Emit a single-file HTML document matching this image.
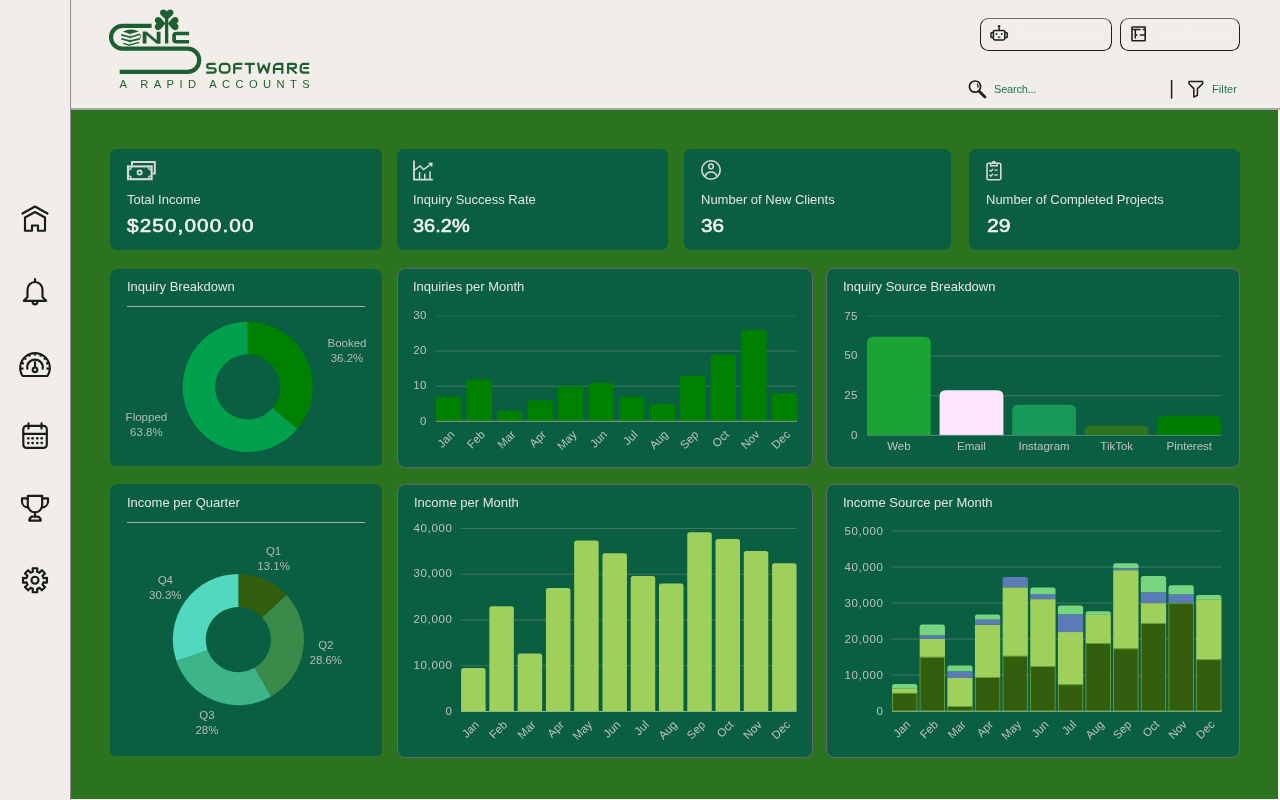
<!DOCTYPE html>
<html><head><meta charset="utf-8"><title>Dashboard</title>
<style>
*{margin:0;padding:0;box-sizing:border-box}
html,body{width:1280px;height:800px;overflow:hidden;background:#f4f1ec;font-family:"Liberation Sans",sans-serif}
#root{position:relative;width:1280px;height:800px;background:#f7f4ef}
.a{position:absolute}
.card{position:absolute;background:#0a5e42;border-radius:7px}
.panel{position:absolute;background:#0a5e42;border-radius:8.5px}
.bord{border:1px solid #686470}
.kl{position:absolute;color:#e2e5df;font-size:13px;white-space:nowrap;line-height:16px}
.kv{position:absolute;color:#f5f5f3;font-size:19px;font-weight:normal;-webkit-text-stroke:0.55px #f5f5f3;white-space:nowrap;line-height:22px}
.pt{position:absolute;color:#e2e5df;font-size:13px;white-space:nowrap;line-height:16px}
svg{position:absolute;overflow:visible;will-change:transform}
.a,.kl,.kv,.pt{will-change:transform}
</style></head><body>
<div id="root">
<div class="a" style="left:0;top:0;width:70px;height:800px;background:#f1eee9"></div>
<div class="a" style="left:70px;top:0;width:1px;height:800px;background:#8d8a90"></div>
<div class="a" style="left:71px;top:0;width:1209px;height:108px;background:#f1eee9"></div>
<div class="a" style="left:71px;top:108px;width:1209px;height:2px;background:#a8a8a6"></div>
<div class="a" style="left:71px;top:110px;width:1207px;height:689px;background:#2c731f"></div>

<svg class="a" style="left:0;top:0" width="1280" height="110" viewBox="0 0 1280 110">
<g fill="none" stroke="#1d5f30" stroke-width="4.2" stroke-linecap="butt">
<path d="M151.6 25.9 H122.4 A11.35 11.35 0 0 0 122.4 48.6 H187.6 A11.6 11.6 0 0 1 187.6 71.8 H119.7"/>
</g>
<g fill="#1d5f30">
<!-- N -->
<rect x="142.7" y="31.7" width="3.8" height="11.8"/>
<rect x="156.7" y="31.7" width="3.8" height="11.8"/>
<polygon points="142.7,31.7 146.8,31.7 160.5,43.5 156.4,43.5"/>
<!-- I / stem -->
<rect x="165" y="17" width="3.3" height="26.5"/>
<!-- C -->
<path d="M189.1 31.7 H176.2 A4 4 0 0 0 172.2 35.7 V39.5 A4 4 0 0 0 176.2 43.5 H189.1 V40 H176 V35.2 H189.1 Z"/>
<!-- shamrock leaves (hearts) -->
<path d="M166.7 19.8 C163 17 160 15 160 12.7 C160 10.8 161.5 9.6 163.3 9.6 C164.8 9.6 166 10.4 166.7 11.6 C167.4 10.4 168.6 9.6 170.1 9.6 C171.9 9.6 173.5 10.8 173.5 12.7 C173.5 15 170.4 17 166.7 19.8 Z"/>
<path d="M165.5 23.6 C162.5 19.9 160.5 17 158.2 17 C156.3 17 154.8 18.5 154.8 20.3 C154.8 21.8 155.6 23 156.8 23.6 C155.6 24.3 154.8 25.5 154.8 27 C154.8 28.8 156.3 30.2 158.2 30.2 C160.5 30.2 162.5 27.3 165.5 23.6 Z"/>
<path d="M167.8 23.6 C170.8 19.9 172.8 17 175.1 17 C177 17 178.5 18.5 178.5 20.3 C178.5 21.8 177.7 23 176.5 23.6 C177.7 24.3 178.5 25.5 178.5 27 C178.5 28.8 177 30.2 175.1 30.2 C172.8 30.2 170.8 27.3 167.8 23.6 Z"/>
</g>
<!-- book stack -->
<path d="M122.9 31.6 Q131 27.6 139 31.6 L129.7 33.9 Z" fill="#1d5f30"/>
<g fill="none" stroke="#1d5f30" stroke-linejoin="round">
<path d="M121.3 34.9 L130.3 37.2 L139.8 34.3" stroke-width="1.7"/>
<path d="M121.3 38.7 L129.9 41.1 L139.7 38.9" stroke-width="1.7"/>
<path d="M123.2 43.4 L129.2 45.1 L139.2 42.3" stroke-width="1.3"/>
<path d="M139.8 34.3 Q141.4 36.6 139.7 38.9" stroke-width="1"/>
<path d="M130.1 33.9 V45.5" stroke-width="0.7" stroke-opacity="0.5"/>
</g>
<g fill="none" stroke="#1d5f30" stroke-width="2.15" stroke-linejoin="round" stroke-linecap="butt">
<path d="M215.6 63.85 H209.6 Q207.15 63.85 207.15 66.05 Q207.15 68.25 209.6 68.25 H213.2 Q215.65 68.25 215.65 70.45 Q215.65 72.65 213.2 72.65 H206.2"/>
<rect x="219.85" y="63.85" width="9.7" height="8.8" rx="3.2"/>
<path d="M242.4 63.85 H236.6 Q234.15 63.85 234.15 66.1 V73.7 M234.15 68.2 H241.8"/>
<path d="M244.7 63.85 H254.8 M249.75 63.85 V73.7"/>
<path d="M257.9 62.8 L259.9 72.65 L263.7 65.3 L267.5 72.65 L269.5 62.8"/>
<path d="M273.95 73.7 V67.6 A3.75 3.75 0 0 1 277.7 63.85 H282.3 V73.7 M273.95 69 H282.3"/>
<path d="M288.1 73.7 V63.85 H293.8 Q296 63.85 296 66.05 Q296 68.25 293.8 68.25 H288.1 M290.6 68.25 L296.6 73.5"/>
<path d="M309.3 63.85 H303.6 A2.9 2.9 0 0 0 300.7 66.75 V69.75 A2.9 2.9 0 0 0 303.6 72.65 H309.3 M303.2 67.95 H308.8"/>
</g>
<text x="119.6" y="88.1" font-family="Liberation Sans" font-size="11.2" fill="#1d5f30" textLength="190" lengthAdjust="spacing">A RAPID ACCOUNTS</text>
</svg>

<div class="a" style="left:980px;top:17.5px;width:132px;height:33.2px;border:1.7px solid #1c1c1c;border-top-color:#6f6d68;border-radius:8.5px"></div>
<div class="a" style="left:1120px;top:17.5px;width:120px;height:33.2px;border:1.7px solid #1c1c1c;border-top-color:#6f6d68;border-radius:8.5px"></div>
<div class="a" style="left:1016px;top:27px;font-size:12px;color:#f2f0eb;white-space:nowrap;line-height:14px">New Automation</div>
<div class="a" style="left:1156px;top:27px;font-size:12px;color:#f2f0eb;white-space:nowrap;line-height:14px">New Template</div>
<svg style="left:0;top:0" width="1280" height="110">
<g fill="none" stroke="#1e1e1e" stroke-width="1.5" stroke-linejoin="round">
 <rect x="993.4" y="30.4" width="11.4" height="9.6" rx="1.4"/>
 <path d="M993.2 32.6 H991.8 A0.8 0.8 0 0 0 991 33.4 V36.8 A0.8 0.8 0 0 0 991.8 37.6 H993.2"/>
 <path d="M1005 32.6 H1006.4 A0.8 0.8 0 0 1 1007.2 33.4 V36.8 A0.8 0.8 0 0 1 1006.4 37.6 H1005"/>
 <path d="M999.1 30.2 V27.2"/>
</g>
<g fill="#1e1e1e"><circle cx="999.1" cy="26.2" r="1.2"/><circle cx="996.5" cy="34" r="0.9"/><circle cx="1001.8" cy="34" r="0.9"/><rect x="997.8" y="36.6" width="2.6" height="1.1" rx="0.5"/></g>
<g fill="none" stroke="#1e1e1e" stroke-width="1.5">
 <rect x="1132" y="27" width="13.2" height="13.8" rx="0.6" stroke-width="1.6"/>
 <path d="M1132 29.5 H1140.6 M1142.6 29.5 H1145.2 M1135.3 29.5 V38.4 M1135.3 35 H1137.4 M1139.8 35 H1145.2"/>
</g>
<g fill="none" stroke="#1e1e1e" stroke-width="1.7">
 <circle cx="975" cy="86.6" r="5.6"/>
 <path d="M977.2 84 A3 3 0 0 1 977.6 87.6" stroke-width="1.1"/>
</g>
<path d="M979.4 91.4 L985 97" stroke="#1e1e1e" stroke-width="2.8" stroke-linecap="round"/>
<path d="M1171.6 80 V98.6" stroke="#1e1e1e" stroke-width="1.5"/>
<path d="M1189 81.6 H1202.6 V83.8 L1197.4 88.6 V95.4 L1193.8 97 V88.6 L1189 83.8 Z" fill="none" stroke="#1e1e1e" stroke-width="1.5" stroke-linejoin="round"/>
</svg>
<div class="a" style="left:994px;top:82.5px;font-size:11px;color:#22744f;white-space:nowrap;line-height:13px;letter-spacing:-0.2px">Search...</div>
<div class="a" style="left:1211.5px;top:82.5px;font-size:11px;color:#22744f;white-space:nowrap;line-height:13px;letter-spacing:0.1px">Filter</div>

<svg style="left:0;top:0" width="71" height="800">
<g fill="none" stroke="#1b1b1b" stroke-width="2.15" stroke-linejoin="round" stroke-linecap="round">
<path d="M22.5 213.5 L35 206.5 L47.5 213.5"/>
<path d="M25 217.5 L35 212 L45 217.5 V230.75 H38 V225.5 H32 V230.75 H25 Z"/>
<path d="M35 279 V282"/>
<path d="M23.8 300.8 H46.2 L42.5 297 V289.6 A7.5 7.6 0 0 0 27.5 289.6 V297 Z"/>
<path d="M32.6 302 A2.4 2.4 0 0 0 37.4 302"/>
<path d="M22.6 376 A14.8 14.8 0 1 1 47.4 376 Z"/>
<path d="M20.91 368.73 L23.49 368.41 M21.42 362.85 L23.91 363.61 M24.12 357.87 L26.11 359.54 M28.78 354.24 L29.91 356.57 M35.00 352.80 L35.00 355.40 M41.22 354.24 L40.09 356.57 M45.88 357.87 L43.89 359.54 M48.58 362.85 L46.09 363.61 M49.09 368.73 L46.51 368.41 " stroke-linecap="butt"/>
<path d="M27.3 368.6 A7.8 7.8 0 1 1 42.7 368.6"/>
<path d="M35 362 V367.6"/>
<circle cx="35" cy="369.8" r="2.3"/>
<rect x="23.3" y="425.9" width="23.5" height="22" rx="3.2"/>
<path d="M23.3 433.8 H46.8"/>
<path d="M28.5 423.2 V428.6 M41.5 423.2 V428.6"/>
<path d="M27.8 495.8 H42.2 V505 A7.2 7.4 0 0 1 27.8 505 Z"/>
<path d="M27.6 498.4 H22 V502 A6 6 0 0 0 27.8 507.4"/>
<path d="M42.4 498.4 H48 V502 A6 6 0 0 1 42.2 507.4"/>
<path d="M35 512.5 V516.5"/>
<path d="M32.2 516.6 H37.8 Q40.6 517.8 40.8 520.6 H29.2 Q29.4 517.8 32.2 516.6 Z"/>
<path d="M32.90 571.81 L32.67 568.27 L37.33 568.27 L37.10 571.81 L39.48 572.79 L41.82 570.14 L45.11 573.43 L42.46 575.77 L43.44 578.15 L46.98 577.92 L46.98 582.58 L43.44 582.35 L42.46 584.73 L45.11 587.07 L41.82 590.36 L39.48 587.71 L37.10 588.69 L37.33 592.23 L32.67 592.23 L32.90 588.69 L30.52 587.71 L28.18 590.36 L24.89 587.07 L27.54 584.73 L26.56 582.35 L23.02 582.58 L23.02 577.92 L26.56 578.15 L27.54 575.77 L24.89 573.43 L28.18 570.14 L30.52 572.79 Z"/>
<circle cx="35" cy="580.25" r="3.5"/>
</g>
<g fill="#1b1b1b">
<circle cx="28.3" cy="438.3" r="1.35"/><circle cx="32.6" cy="438.3" r="1.35"/><circle cx="37.3" cy="438.3" r="1.35"/><circle cx="41.7" cy="438.3" r="1.35"/><circle cx="28.3" cy="443" r="1.35"/><circle cx="32.6" cy="443" r="1.35"/><circle cx="37.3" cy="443" r="1.35"/><circle cx="41.7" cy="443" r="1.35"/>
</g>
</svg>

<div class="card" style="left:110px;top:148.6px;width:272px;height:101.6px"></div>
<div class="card" style="left:397px;top:148.6px;width:271.3px;height:101.6px"></div>
<div class="card" style="left:684px;top:148.6px;width:266.5px;height:101.6px"></div>
<div class="card" style="left:969px;top:148.6px;width:271px;height:101.6px"></div>
<div class="kl" style="left:127px;top:191.5px">Total Income</div>
<div class="kl" style="left:413px;top:191.5px">Inquiry Success Rate</div>
<div class="kl" style="left:701px;top:191.5px">Number of New Clients</div>
<div class="kl" style="left:986px;top:191.5px">Number of Completed Projects</div>
<div class="kv" style="left:127.3px;top:214.5px;letter-spacing:1.0px;font-size:18.5px;transform:scaleX(1.12);transform-origin:0 0">$250,000.00</div>
<div class="kv" style="left:413px;top:214.5px;letter-spacing:0px;font-size:18.5px;transform:scaleX(1.08);transform-origin:0 0">36.2%</div>
<div class="kv" style="left:701px;top:214.5px;letter-spacing:0px;font-size:18.5px;transform:scaleX(1.12);transform-origin:0 0">36</div>
<div class="kv" style="left:987px;top:214.5px;letter-spacing:0px;font-size:18.5px;transform:scaleX(1.145);transform-origin:0 0">29</div>
<svg style="left:0;top:0" width="1280" height="260">
<g fill="none" stroke="#d9d9d7" stroke-width="1.8" stroke-linejoin="miter">
<path d="M132 165.4 V162 H154.8 V173.6 H152.6" stroke-width="2"/>
<rect x="128" y="166.4" width="23.6" height="12.8" stroke-width="2.1"/>
<circle cx="139.6" cy="172.6" r="2.1"/>
<path d="M128.4 169.8 A3 3 0 0 0 131.3 166.8 M148.3 166.8 A3 3 0 0 0 151.2 169.8 M128.4 175.9 A3 3 0 0 1 131.3 178.8 M148.3 178.8 A3 3 0 0 1 151.2 175.9" stroke-width="1.4"/>
<path d="M414 160.6 V179.6 H432.8" stroke-width="1.8"/>
<path d="M414.8 170 L420 166 L423.5 169.6 L431.2 164.2" stroke-width="1.5"/>
<path d="M428.6 163.4 L431.8 163.2 L431.6 166.6" stroke-width="1.5"/>
<path d="M419.6 172 V179 M424.8 173.6 V179 M430 171.2 V179" stroke-width="1.5"/>
<circle cx="711" cy="170" r="9.2" stroke-width="1.6"/>
<circle cx="711" cy="166.4" r="2.3" stroke-width="1.5"/>
<path d="M705 176.4 A6.3 6.3 0 0 1 717 176.4" stroke-width="1.6"/>
<rect x="987" y="163.2" width="13.8" height="16.6" rx="1.6" stroke-width="1.6"/>
<path d="M990.6 163.2 V165.8 H997.2 V163.2 M992.4 163 A1.4 1.4 0 0 1 995.4 163" stroke-width="1.5"/>
<path d="M989.4 170 L990.8 171.4 L993 169 M989.4 174.8 L990.8 176.2 L993 173.8 M994.4 170.2 H997.6 M994.4 175 H997.6" stroke-width="1.3"/>
</g>
</svg>

<div class="panel" style="left:110px;top:268.7px;width:272px;height:197.1px;border-radius:8px 8px 6px 6px"></div>
<div class="panel bord" style="left:397.2px;top:268.4px;width:415.8px;height:199.4px"></div>
<div class="panel bord" style="left:826.2px;top:268.4px;width:413.8px;height:199.4px"></div>
<div class="panel" style="left:110px;top:484px;width:272px;height:272px;border-radius:8px 8px 5.5px 5.5px"></div>
<div class="panel bord" style="left:397.2px;top:483.6px;width:415.8px;height:274px"></div>
<div class="panel bord" style="left:826.2px;top:483.6px;width:413.8px;height:274px"></div>
<div class="pt" style="left:127px;top:278.8px">Inquiry Breakdown</div>
<div class="pt" style="left:413px;top:278.8px">Inquiries per Month</div>
<div class="pt" style="left:843px;top:278.8px">Inquiry Source Breakdown</div>
<div class="pt" style="left:127px;top:494.8px">Income per Quarter</div>
<div class="pt" style="left:414px;top:494.8px">Income per Month</div>
<div class="pt" style="left:843px;top:494.8px">Income Source per Month</div>
<div class="a" style="left:127px;top:305.6px;width:238px;height:1.3px;background:#a9b1a9"></div>
<div class="a" style="left:127px;top:521.6px;width:238px;height:1.3px;background:#a9b1a9"></div>
<svg style="left:0;top:0" width="1280" height="800"><path fill="#008000" d="M247.70 321.80 A65.1 65.1 0 0 1 297.34 429.02 L272.48 407.93 A32.5 32.5 0 0 0 247.70 354.40 Z"/><path fill="#00a04c" d="M297.34 429.02 A65.1 65.1 0 1 1 247.70 321.80 L247.70 354.40 A32.5 32.5 0 1 0 272.48 407.93 Z"/><text x="347.00" y="346.60" text-anchor="middle" font-family="Liberation Sans" font-size="11.5" fill="#b4bcb2" >Booked</text><text x="347.00" y="361.50" text-anchor="middle" font-family="Liberation Sans" font-size="11.5" fill="#b4bcb2" >36.2%</text><text x="146.40" y="420.80" text-anchor="middle" font-family="Liberation Sans" font-size="11.5" fill="#b4bcb2" >Flopped</text><text x="146.40" y="435.60" text-anchor="middle" font-family="Liberation Sans" font-size="11.5" fill="#b4bcb2" >63.8%</text><path fill="#335e0e" d="M238.40 574.00 A65.6 65.6 0 0 1 286.50 595.00 L262.30 617.43 A32.6 32.6 0 0 0 238.40 607.00 Z"/><path fill="#3a8a4a" d="M286.50 595.00 A65.6 65.6 0 0 1 271.08 696.48 L254.64 667.87 A32.6 32.6 0 0 0 262.30 617.43 Z"/><path fill="#3eb489" d="M271.08 696.48 A65.6 65.6 0 0 1 176.40 661.04 L207.59 650.26 A32.6 32.6 0 0 0 254.64 667.87 Z"/><path fill="#52d8be" d="M176.40 661.04 A65.6 65.6 0 0 1 238.40 574.00 L238.40 607.00 A32.6 32.6 0 0 0 207.59 650.26 Z"/><text x="273.60" y="555.00" text-anchor="middle" font-family="Liberation Sans" font-size="11.5" fill="#b4bcb2" >Q1</text><text x="273.60" y="569.50" text-anchor="middle" font-family="Liberation Sans" font-size="11.5" fill="#b4bcb2" >13.1%</text><text x="325.80" y="649.00" text-anchor="middle" font-family="Liberation Sans" font-size="11.5" fill="#b4bcb2" >Q2</text><text x="325.80" y="664.00" text-anchor="middle" font-family="Liberation Sans" font-size="11.5" fill="#b4bcb2" >28.6%</text><text x="206.90" y="719.30" text-anchor="middle" font-family="Liberation Sans" font-size="11.5" fill="#b4bcb2" >Q3</text><text x="206.90" y="734.20" text-anchor="middle" font-family="Liberation Sans" font-size="11.5" fill="#b4bcb2" >28%</text><text x="165.30" y="584.40" text-anchor="middle" font-family="Liberation Sans" font-size="11.5" fill="#b4bcb2" >Q4</text><text x="165.30" y="599.30" text-anchor="middle" font-family="Liberation Sans" font-size="11.5" fill="#b4bcb2" >30.3%</text><path d="M436 316.00 H797" stroke="#3d7a5c" stroke-width="1" stroke-opacity="0.55"/><path d="M436 351.10 H797" stroke="#3d7a5c" stroke-width="1" stroke-opacity="1"/><path d="M436 386.20 H797" stroke="#3d7a5c" stroke-width="1" stroke-opacity="1"/><path fill="#008000" d="M436.00 421.30 V399.23 Q436.00 396.73 438.50 396.73 H459.00 Q461.50 396.73 461.50 399.23 V421.30 Z"/><path fill="#008000" d="M466.50 421.30 V381.68 Q466.50 379.18 469.00 379.18 H489.50 Q492.00 379.18 492.00 381.68 V421.30 Z"/><path fill="#008000" d="M497.00 421.30 V413.27 Q497.00 410.77 499.50 410.77 H520.00 Q522.50 410.77 522.50 413.27 V421.30 Z"/><path fill="#008000" d="M527.50 421.30 V402.74 Q527.50 400.24 530.00 400.24 H550.50 Q553.00 400.24 553.00 402.74 V421.30 Z"/><path fill="#008000" d="M558.00 421.30 V388.70 Q558.00 386.20 560.50 386.20 H581.00 Q583.50 386.20 583.50 388.70 V421.30 Z"/><path fill="#008000" d="M588.50 421.30 V385.19 Q588.50 382.69 591.00 382.69 H611.50 Q614.00 382.69 614.00 385.19 V421.30 Z"/><path fill="#008000" d="M619.00 421.30 V399.23 Q619.00 396.73 621.50 396.73 H642.00 Q644.50 396.73 644.50 399.23 V421.30 Z"/><path fill="#008000" d="M649.50 421.30 V406.25 Q649.50 403.75 652.00 403.75 H672.50 Q675.00 403.75 675.00 406.25 V421.30 Z"/><path fill="#008000" d="M680.00 421.30 V378.17 Q680.00 375.67 682.50 375.67 H703.00 Q705.50 375.67 705.50 378.17 V421.30 Z"/><path fill="#008000" d="M710.50 421.30 V357.11 Q710.50 354.61 713.00 354.61 H733.50 Q736.00 354.61 736.00 357.11 V421.30 Z"/><path fill="#008000" d="M741.00 421.30 V332.54 Q741.00 330.04 743.50 330.04 H764.00 Q766.50 330.04 766.50 332.54 V421.30 Z"/><path fill="#008000" d="M771.50 421.30 V395.72 Q771.50 393.22 774.00 393.22 H794.50 Q797.00 393.22 797.00 395.72 V421.30 Z"/><path d="M436 421.30 H797" stroke="#8a9a8e" stroke-width="1"/><text x="426.60" y="319.20" text-anchor="end" font-family="Liberation Sans" font-size="11.5" fill="#bec4bb" letter-spacing="0.3">30</text><text x="426.60" y="354.30" text-anchor="end" font-family="Liberation Sans" font-size="11.5" fill="#bec4bb" letter-spacing="0.3">20</text><text x="426.60" y="389.40" text-anchor="end" font-family="Liberation Sans" font-size="11.5" fill="#bec4bb" letter-spacing="0.3">10</text><text x="426.60" y="424.50" text-anchor="end" font-family="Liberation Sans" font-size="11.5" fill="#bec4bb" letter-spacing="0.3">0</text><text x="455.25" y="435.30" text-anchor="end" font-family="Liberation Sans" font-size="11.5" fill="#bec4bb" transform="rotate(-45 455.25 435.30)">Jan</text><text x="485.75" y="435.30" text-anchor="end" font-family="Liberation Sans" font-size="11.5" fill="#bec4bb" transform="rotate(-45 485.75 435.30)">Feb</text><text x="516.25" y="435.30" text-anchor="end" font-family="Liberation Sans" font-size="11.5" fill="#bec4bb" transform="rotate(-45 516.25 435.30)">Mar</text><text x="546.75" y="435.30" text-anchor="end" font-family="Liberation Sans" font-size="11.5" fill="#bec4bb" transform="rotate(-45 546.75 435.30)">Apr</text><text x="577.25" y="435.30" text-anchor="end" font-family="Liberation Sans" font-size="11.5" fill="#bec4bb" transform="rotate(-45 577.25 435.30)">May</text><text x="607.75" y="435.30" text-anchor="end" font-family="Liberation Sans" font-size="11.5" fill="#bec4bb" transform="rotate(-45 607.75 435.30)">Jun</text><text x="638.25" y="435.30" text-anchor="end" font-family="Liberation Sans" font-size="11.5" fill="#bec4bb" transform="rotate(-45 638.25 435.30)">Jul</text><text x="668.75" y="435.30" text-anchor="end" font-family="Liberation Sans" font-size="11.5" fill="#bec4bb" transform="rotate(-45 668.75 435.30)">Aug</text><text x="699.25" y="435.30" text-anchor="end" font-family="Liberation Sans" font-size="11.5" fill="#bec4bb" transform="rotate(-45 699.25 435.30)">Sep</text><text x="729.75" y="435.30" text-anchor="end" font-family="Liberation Sans" font-size="11.5" fill="#bec4bb" transform="rotate(-45 729.75 435.30)">Oct</text><text x="760.25" y="435.30" text-anchor="end" font-family="Liberation Sans" font-size="11.5" fill="#bec4bb" transform="rotate(-45 760.25 435.30)">Nov</text><text x="790.75" y="435.30" text-anchor="end" font-family="Liberation Sans" font-size="11.5" fill="#bec4bb" transform="rotate(-45 790.75 435.30)">Dec</text><path d="M867 316.15 H1221.2" stroke="#3d7a5c" stroke-width="1" stroke-opacity="0.55"/><path d="M867 355.90 H1221.2" stroke="#3d7a5c" stroke-width="1" stroke-opacity="1"/><path d="M867 395.65 H1221.2" stroke="#3d7a5c" stroke-width="1" stroke-opacity="1"/><path fill="#1ba336" d="M867.00 435.40 V342.82 Q867.00 336.82 873.00 336.82 H924.80 Q930.80 336.82 930.80 342.82 V435.40 Z"/><path fill="#fde6fd" d="M939.60 435.40 V396.24 Q939.60 390.24 945.60 390.24 H997.40 Q1003.40 390.24 1003.40 396.24 V435.40 Z"/><path fill="#17995a" d="M1012.20 435.40 V410.87 Q1012.20 404.87 1018.20 404.87 H1070.00 Q1076.00 404.87 1076.00 410.87 V435.40 Z"/><path fill="#2c731f" d="M1084.80 435.40 V431.54 Q1084.80 425.54 1090.80 425.54 H1142.60 Q1148.60 425.54 1148.60 431.54 V435.40 Z"/><path fill="#007d00" d="M1157.40 435.40 V421.84 Q1157.40 415.84 1163.40 415.84 H1215.20 Q1221.20 415.84 1221.20 421.84 V435.40 Z"/><path d="M867 435.40 H1221.2" stroke="#4f8a6a" stroke-width="1"/><text x="857.60" y="319.55" text-anchor="end" font-family="Liberation Sans" font-size="11.5" fill="#bec4bb" letter-spacing="0.3">75</text><text x="857.60" y="359.30" text-anchor="end" font-family="Liberation Sans" font-size="11.5" fill="#bec4bb" letter-spacing="0.3">50</text><text x="857.60" y="399.05" text-anchor="end" font-family="Liberation Sans" font-size="11.5" fill="#bec4bb" letter-spacing="0.3">25</text><text x="857.60" y="438.80" text-anchor="end" font-family="Liberation Sans" font-size="11.5" fill="#bec4bb" letter-spacing="0.3">0</text><text x="898.90" y="450.00" text-anchor="middle" font-family="Liberation Sans" font-size="11.5" fill="#bec4bb" >Web</text><text x="971.50" y="450.00" text-anchor="middle" font-family="Liberation Sans" font-size="11.5" fill="#bec4bb" >Email</text><text x="1044.10" y="450.00" text-anchor="middle" font-family="Liberation Sans" font-size="11.5" fill="#bec4bb" >Instagram</text><text x="1116.70" y="450.00" text-anchor="middle" font-family="Liberation Sans" font-size="11.5" fill="#bec4bb" >TikTok</text><text x="1189.30" y="450.00" text-anchor="middle" font-family="Liberation Sans" font-size="11.5" fill="#bec4bb" >Pinterest</text><path d="M461.1 528.50 H796.5" stroke="#3d7a5c" stroke-width="1"/><path d="M461.1 574.25 H796.5" stroke="#3d7a5c" stroke-width="1"/><path d="M461.1 620.00 H796.5" stroke="#3d7a5c" stroke-width="1"/><path d="M461.1 665.75 H796.5" stroke="#3d7a5c" stroke-width="1"/><path fill="#a0d05c" d="M461.10 711.50 V670.54 Q461.10 668.04 463.60 668.04 H483.10 Q485.60 668.04 485.60 670.54 V711.50 Z"/><path fill="#a0d05c" d="M489.37 711.50 V608.77 Q489.37 606.27 491.87 606.27 H511.37 Q513.87 606.27 513.87 608.77 V711.50 Z"/><path fill="#a0d05c" d="M517.64 711.50 V655.90 Q517.64 653.40 520.14 653.40 H539.64 Q542.14 653.40 542.14 655.90 V711.50 Z"/><path fill="#a0d05c" d="M545.91 711.50 V590.48 Q545.91 587.98 548.41 587.98 H567.91 Q570.41 587.98 570.41 590.48 V711.50 Z"/><path fill="#a0d05c" d="M574.18 711.50 V542.89 Q574.18 540.39 576.68 540.39 H596.18 Q598.68 540.39 598.68 542.89 V711.50 Z"/><path fill="#a0d05c" d="M602.45 711.50 V555.70 Q602.45 553.20 604.95 553.20 H624.45 Q626.95 553.20 626.95 555.70 V711.50 Z"/><path fill="#a0d05c" d="M630.72 711.50 V578.58 Q630.72 576.08 633.22 576.08 H652.72 Q655.22 576.08 655.22 578.58 V711.50 Z"/><path fill="#a0d05c" d="M658.99 711.50 V585.90 Q658.99 583.40 661.49 583.40 H680.99 Q683.49 583.40 683.49 585.90 V711.50 Z"/><path fill="#a0d05c" d="M687.26 711.50 V534.66 Q687.26 532.16 689.76 532.16 H709.26 Q711.76 532.16 711.76 534.66 V711.50 Z"/><path fill="#a0d05c" d="M715.53 711.50 V541.52 Q715.53 539.02 718.03 539.02 H737.53 Q740.03 539.02 740.03 541.52 V711.50 Z"/><path fill="#a0d05c" d="M743.80 711.50 V553.42 Q743.80 550.92 746.30 550.92 H765.80 Q768.30 550.92 768.30 553.42 V711.50 Z"/><path fill="#a0d05c" d="M772.07 711.50 V565.77 Q772.07 563.27 774.57 563.27 H794.07 Q796.57 563.27 796.57 565.77 V711.50 Z"/><path d="M461.1 711.50 H796.5" stroke="#8fb880" stroke-width="1"/><text x="452.40" y="531.50" text-anchor="end" font-family="Liberation Sans" font-size="11.5" fill="#bec4bb" letter-spacing="0.6">40,000</text><text x="452.40" y="577.25" text-anchor="end" font-family="Liberation Sans" font-size="11.5" fill="#bec4bb" letter-spacing="0.6">30,000</text><text x="452.40" y="623.00" text-anchor="end" font-family="Liberation Sans" font-size="11.5" fill="#bec4bb" letter-spacing="0.6">20,000</text><text x="452.40" y="668.75" text-anchor="end" font-family="Liberation Sans" font-size="11.5" fill="#bec4bb" letter-spacing="0.6">10,000</text><text x="452.40" y="714.50" text-anchor="end" font-family="Liberation Sans" font-size="11.5" fill="#bec4bb" letter-spacing="0.6">0</text><text x="479.85" y="725.50" text-anchor="end" font-family="Liberation Sans" font-size="11.5" fill="#bec4bb" transform="rotate(-45 479.85 725.50)">Jan</text><text x="508.12" y="725.50" text-anchor="end" font-family="Liberation Sans" font-size="11.5" fill="#bec4bb" transform="rotate(-45 508.12 725.50)">Feb</text><text x="536.39" y="725.50" text-anchor="end" font-family="Liberation Sans" font-size="11.5" fill="#bec4bb" transform="rotate(-45 536.39 725.50)">Mar</text><text x="564.66" y="725.50" text-anchor="end" font-family="Liberation Sans" font-size="11.5" fill="#bec4bb" transform="rotate(-45 564.66 725.50)">Apr</text><text x="592.93" y="725.50" text-anchor="end" font-family="Liberation Sans" font-size="11.5" fill="#bec4bb" transform="rotate(-45 592.93 725.50)">May</text><text x="621.20" y="725.50" text-anchor="end" font-family="Liberation Sans" font-size="11.5" fill="#bec4bb" transform="rotate(-45 621.20 725.50)">Jun</text><text x="649.47" y="725.50" text-anchor="end" font-family="Liberation Sans" font-size="11.5" fill="#bec4bb" transform="rotate(-45 649.47 725.50)">Jul</text><text x="677.74" y="725.50" text-anchor="end" font-family="Liberation Sans" font-size="11.5" fill="#bec4bb" transform="rotate(-45 677.74 725.50)">Aug</text><text x="706.01" y="725.50" text-anchor="end" font-family="Liberation Sans" font-size="11.5" fill="#bec4bb" transform="rotate(-45 706.01 725.50)">Sep</text><text x="734.28" y="725.50" text-anchor="end" font-family="Liberation Sans" font-size="11.5" fill="#bec4bb" transform="rotate(-45 734.28 725.50)">Oct</text><text x="762.55" y="725.50" text-anchor="end" font-family="Liberation Sans" font-size="11.5" fill="#bec4bb" transform="rotate(-45 762.55 725.50)">Nov</text><text x="790.82" y="725.50" text-anchor="end" font-family="Liberation Sans" font-size="11.5" fill="#bec4bb" transform="rotate(-45 790.82 725.50)">Dec</text><path d="M892 530.95 H1221.7" stroke="#3d7a5c" stroke-width="1"/><path d="M892 567.00 H1221.7" stroke="#3d7a5c" stroke-width="1"/><path d="M892 603.05 H1221.7" stroke="#3d7a5c" stroke-width="1"/><path d="M892 639.10 H1221.7" stroke="#3d7a5c" stroke-width="1"/><path d="M892 675.15 H1221.7" stroke="#3d7a5c" stroke-width="1"/><rect x="892.00" y="692.92" width="25.3" height="18.28" fill="#335e0e"/><rect x="892.00" y="688.42" width="25.3" height="4.51" fill="#a0d05c"/><path fill="#77d580" d="M892.00 688.42 V686.52 Q892.00 684.02 894.50 684.02 H914.80 Q917.30 684.02 917.30 686.52 V688.42 Z"/><rect x="892.40" y="693.32" width="24.50" height="17.88" fill="none" stroke="#7fb84e" stroke-width="0.8" stroke-opacity="0.8"/><rect x="919.65" y="656.87" width="25.3" height="54.33" fill="#335e0e"/><rect x="919.65" y="638.88" width="25.3" height="17.99" fill="#a0d05c"/><rect x="919.65" y="635.28" width="25.3" height="3.60" fill="#5a7bb5"/><path fill="#77d580" d="M919.65 635.28 V626.89 Q919.65 624.39 922.15 624.39 H942.45 Q944.95 624.39 944.95 626.89 V635.28 Z"/><rect x="920.05" y="657.27" width="24.50" height="53.93" fill="none" stroke="#7fb84e" stroke-width="0.8" stroke-opacity="0.8"/><rect x="947.30" y="706.12" width="25.3" height="5.08" fill="#335e0e"/><rect x="947.30" y="677.96" width="25.3" height="28.16" fill="#a0d05c"/><rect x="947.30" y="671.36" width="25.3" height="6.60" fill="#5a7bb5"/><path fill="#77d580" d="M947.30 671.36 V667.99 Q947.30 665.49 949.80 665.49 H970.10 Q972.60 665.49 972.60 667.99 V671.36 Z"/><rect x="947.70" y="706.52" width="24.50" height="4.68" fill="none" stroke="#7fb84e" stroke-width="0.8" stroke-opacity="0.8"/><rect x="974.95" y="677.13" width="25.3" height="34.07" fill="#335e0e"/><rect x="974.95" y="624.72" width="25.3" height="52.42" fill="#a0d05c"/><rect x="974.95" y="619.42" width="25.3" height="5.30" fill="#5a7bb5"/><path fill="#77d580" d="M974.95 619.42 V617.12 Q974.95 614.62 977.45 614.62 H997.75 Q1000.25 614.62 1000.25 617.12 V619.42 Z"/><rect x="975.35" y="677.53" width="24.50" height="33.67" fill="none" stroke="#7fb84e" stroke-width="0.8" stroke-opacity="0.8"/><rect x="1002.60" y="655.86" width="25.3" height="55.34" fill="#335e0e"/><rect x="1002.60" y="587.37" width="25.3" height="68.49" fill="#a0d05c"/><path fill="#5a7bb5" d="M1002.60 587.37 V579.38 Q1002.60 576.88 1005.10 576.88 H1025.40 Q1027.90 576.88 1027.90 579.38 V587.37 Z"/><rect x="1003.00" y="656.26" width="24.50" height="54.94" fill="none" stroke="#7fb84e" stroke-width="0.8" stroke-opacity="0.8"/><rect x="1030.25" y="666.25" width="25.3" height="44.95" fill="#335e0e"/><rect x="1030.25" y="599.16" width="25.3" height="67.09" fill="#a0d05c"/><rect x="1030.25" y="594.25" width="25.3" height="4.90" fill="#5a7bb5"/><path fill="#77d580" d="M1030.25 594.25 V589.98 Q1030.25 587.48 1032.75 587.48 H1053.05 Q1055.55 587.48 1055.55 589.98 V594.25 Z"/><rect x="1030.65" y="666.65" width="24.50" height="44.55" fill="none" stroke="#7fb84e" stroke-width="0.8" stroke-opacity="0.8"/><rect x="1057.90" y="684.34" width="25.3" height="26.86" fill="#335e0e"/><rect x="1057.90" y="632.03" width="25.3" height="52.31" fill="#a0d05c"/><rect x="1057.90" y="614.26" width="25.3" height="17.77" fill="#5a7bb5"/><path fill="#77d580" d="M1057.90 614.26 V608.07 Q1057.90 605.57 1060.40 605.57 H1080.70 Q1083.20 605.57 1083.20 608.07 V614.26 Z"/><rect x="1058.30" y="684.74" width="24.50" height="26.46" fill="none" stroke="#7fb84e" stroke-width="0.8" stroke-opacity="0.8"/><rect x="1085.55" y="643.07" width="25.3" height="68.13" fill="#335e0e"/><rect x="1085.55" y="614.23" width="25.3" height="28.84" fill="#a0d05c"/><path fill="#77d580" d="M1085.55 614.23 V613.63 Q1085.55 611.13 1088.05 611.13 H1108.35 Q1110.85 611.13 1110.85 613.63 V614.23 Z"/><rect x="1085.95" y="643.47" width="24.50" height="67.73" fill="none" stroke="#7fb84e" stroke-width="0.8" stroke-opacity="0.8"/><rect x="1113.20" y="648.47" width="25.3" height="62.73" fill="#335e0e"/><rect x="1113.20" y="570.17" width="25.3" height="78.30" fill="#a0d05c"/><rect x="1113.20" y="568.37" width="25.3" height="1.80" fill="#5a7bb5"/><path fill="#77d580" d="M1113.20 568.37 V565.68 Q1113.20 563.18 1115.70 563.18 H1136.00 Q1138.50 563.18 1138.50 565.68 V568.37 Z"/><rect x="1113.60" y="648.87" width="24.50" height="62.33" fill="none" stroke="#7fb84e" stroke-width="0.8" stroke-opacity="0.8"/><rect x="1140.85" y="623.17" width="25.3" height="88.03" fill="#335e0e"/><rect x="1140.85" y="603.12" width="25.3" height="20.04" fill="#a0d05c"/><rect x="1140.85" y="592.20" width="25.3" height="10.92" fill="#5a7bb5"/><path fill="#77d580" d="M1140.85 592.20 V578.58 Q1140.85 576.08 1143.35 576.08 H1163.65 Q1166.15 576.08 1166.15 578.58 V592.20 Z"/><rect x="1141.25" y="623.57" width="24.50" height="87.63" fill="none" stroke="#7fb84e" stroke-width="0.8" stroke-opacity="0.8"/><rect x="1168.50" y="602.94" width="25.3" height="108.26" fill="#335e0e"/><rect x="1168.50" y="594.15" width="25.3" height="8.80" fill="#5a7bb5"/><path fill="#77d580" d="M1168.50 594.15 V587.74 Q1168.50 585.24 1171.00 585.24 H1191.30 Q1193.80 585.24 1193.80 587.74 V594.15 Z"/><rect x="1168.90" y="603.34" width="24.50" height="107.86" fill="none" stroke="#7fb84e" stroke-width="0.8" stroke-opacity="0.8"/><rect x="1196.15" y="659.32" width="25.3" height="51.88" fill="#335e0e"/><rect x="1196.15" y="599.23" width="25.3" height="60.10" fill="#a0d05c"/><path fill="#77d580" d="M1196.15 599.23 V597.62 Q1196.15 595.12 1198.65 595.12 H1218.95 Q1221.45 595.12 1221.45 597.62 V599.23 Z"/><rect x="1196.55" y="659.72" width="24.50" height="51.48" fill="none" stroke="#7fb84e" stroke-width="0.8" stroke-opacity="0.8"/><path d="M892 711.20 H1221.7" stroke="#8fb880" stroke-width="1"/><text x="883.40" y="534.55" text-anchor="end" font-family="Liberation Sans" font-size="11.5" fill="#bec4bb" letter-spacing="0.6">50,000</text><text x="883.40" y="570.60" text-anchor="end" font-family="Liberation Sans" font-size="11.5" fill="#bec4bb" letter-spacing="0.6">40,000</text><text x="883.40" y="606.65" text-anchor="end" font-family="Liberation Sans" font-size="11.5" fill="#bec4bb" letter-spacing="0.6">30,000</text><text x="883.40" y="642.70" text-anchor="end" font-family="Liberation Sans" font-size="11.5" fill="#bec4bb" letter-spacing="0.6">20,000</text><text x="883.40" y="678.75" text-anchor="end" font-family="Liberation Sans" font-size="11.5" fill="#bec4bb" letter-spacing="0.6">10,000</text><text x="883.40" y="714.80" text-anchor="end" font-family="Liberation Sans" font-size="11.5" fill="#bec4bb" letter-spacing="0.6">0</text><text x="911.15" y="725.20" text-anchor="end" font-family="Liberation Sans" font-size="11.5" fill="#bec4bb" transform="rotate(-45 911.15 725.20)">Jan</text><text x="938.80" y="725.20" text-anchor="end" font-family="Liberation Sans" font-size="11.5" fill="#bec4bb" transform="rotate(-45 938.80 725.20)">Feb</text><text x="966.45" y="725.20" text-anchor="end" font-family="Liberation Sans" font-size="11.5" fill="#bec4bb" transform="rotate(-45 966.45 725.20)">Mar</text><text x="994.10" y="725.20" text-anchor="end" font-family="Liberation Sans" font-size="11.5" fill="#bec4bb" transform="rotate(-45 994.10 725.20)">Apr</text><text x="1021.75" y="725.20" text-anchor="end" font-family="Liberation Sans" font-size="11.5" fill="#bec4bb" transform="rotate(-45 1021.75 725.20)">May</text><text x="1049.40" y="725.20" text-anchor="end" font-family="Liberation Sans" font-size="11.5" fill="#bec4bb" transform="rotate(-45 1049.40 725.20)">Jun</text><text x="1077.05" y="725.20" text-anchor="end" font-family="Liberation Sans" font-size="11.5" fill="#bec4bb" transform="rotate(-45 1077.05 725.20)">Jul</text><text x="1104.70" y="725.20" text-anchor="end" font-family="Liberation Sans" font-size="11.5" fill="#bec4bb" transform="rotate(-45 1104.70 725.20)">Aug</text><text x="1132.35" y="725.20" text-anchor="end" font-family="Liberation Sans" font-size="11.5" fill="#bec4bb" transform="rotate(-45 1132.35 725.20)">Sep</text><text x="1160.00" y="725.20" text-anchor="end" font-family="Liberation Sans" font-size="11.5" fill="#bec4bb" transform="rotate(-45 1160.00 725.20)">Oct</text><text x="1187.65" y="725.20" text-anchor="end" font-family="Liberation Sans" font-size="11.5" fill="#bec4bb" transform="rotate(-45 1187.65 725.20)">Nov</text><text x="1215.30" y="725.20" text-anchor="end" font-family="Liberation Sans" font-size="11.5" fill="#bec4bb" transform="rotate(-45 1215.30 725.20)">Dec</text></svg>
</div></body></html>
